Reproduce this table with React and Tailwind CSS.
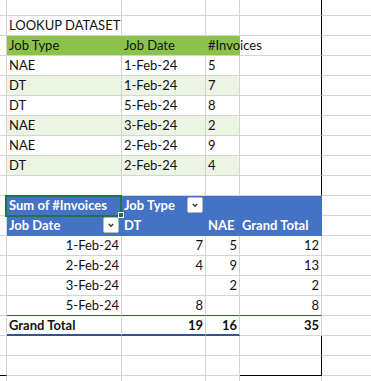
import React from "react";

const RC = {
  g: "border-r-[#d4d4d4]",
  blue: "border-r-[#4472c4]",
  green: "border-r-[#8bc34a]",
  k: "border-r-black",
  none: "border-r-0",
};
const BC = {
  g: "border-b border-b-[#d4d4d4]",
  blue: "border-b border-b-[#4472c4]",
  dk: "border-b border-b-[#2f5597]",
  thick: "border-b-2 border-b-[#2f5597]",
  k: "border-b border-b-black",
  none: "border-b-0",
};

function Cell({ r = "g", b = "g", h = "h-[20px]", cls = "", children }) {
  return (
    <div
      className={`border-r ${RC[r]} ${BC[b]} ${h} ${cls} whitespace-nowrap leading-[19px] px-[2px] min-w-0`}
    >
      {children}
    </div>
  );
}

function Drop() {
  return (
    <div className="w-[16px] h-[16px] bg-white border border-[#b8b8b8] rounded-[2px] flex items-center justify-center shrink-0">
      <svg width="10" height="10" viewBox="0 0 10 10">
        <path d="M2.8 4 L5 6.2 L7.2 4" fill="none" stroke="#333" strokeWidth="1.4" />
      </svg>
    </div>
  );
}

const data = [
  ["NAE", "1-Feb-24", "5", false],
  ["DT", "1-Feb-24", "7", true],
  ["DT", "5-Feb-24", "8", false],
  ["NAE", "3-Feb-24", "2", true],
  ["NAE", "2-Feb-24", "9", false],
  ["DT", "2-Feb-24", "4", true],
];

const pivot = [
  ["1-Feb-24", "7", "5", "12"],
  ["2-Feb-24", "4", "9", "13"],
  ["3-Feb-24", "", "2", "2"],
  ["5-Feb-24", "8", "", "8"],
];

export default function App() {
  const lt = "bg-[#ecf4e4]";
  const bl = "bg-[#4472c4] text-white font-bold";
  return (
    <div className="w-[371px] h-[381px] overflow-hidden bg-white text-[#111] text-[13px] font-['Lato','Noto_Sans',sans-serif]">
      <div className="grid grid-cols-[7px_115px_84px_34px_82px_1fr]">
        {/* r0 */}
        <Cell h="h-[16px]" />
        <Cell h="h-[16px]" />
        <Cell h="h-[16px]" />
        <Cell h="h-[16px]" />
        <Cell h="h-[16px]" r="k" />
        <Cell h="h-[16px]" r="none" />
        {/* r1 */}
        <Cell />
        <Cell>LOOKUP DATASET</Cell>
        <Cell />
        <Cell />
        <Cell r="k" />
        <Cell r="none" />
        {/* r2 header */}
        <Cell />
        <Cell r="green" cls="bg-[#8bc34a]">Job Type</Cell>
        <Cell r="green" cls="bg-[#8bc34a]">Job Date</Cell>
        <Cell r="green" cls="bg-[#8bc34a] relative z-10">#Invoices</Cell>
        <Cell r="k" />
        <Cell r="none" />
        {/* data */}
        {data.map(([t, d, n, l], i) => (
          <React.Fragment key={i}>
            <Cell />
            <Cell cls={l ? lt : ""}>{t}</Cell>
            <Cell cls={l ? lt : ""}>{d}</Cell>
            <Cell cls={l ? lt : ""}>{n}</Cell>
            <Cell r="k" />
            <Cell r="none" />
          </React.Fragment>
        ))}
        {/* r9 */}
        <Cell />
        <Cell />
        <Cell />
        <Cell />
        <Cell r="k" />
        <Cell r="none" />
        {/* r10 pivot header */}
        <Cell />
        <Cell r="blue" b="blue" cls={`${bl} relative`}>
          Sum of #Invoices
          <div className="absolute left-[-2px] top-[-1px] w-[117px] h-[22px] border-2 border-[#217346] z-20" />
          <div className="absolute left-[111px] top-[16px] w-[6px] h-[6px] bg-[#217346] border border-white z-20" />
        </Cell>
        <Cell r="blue" b="blue" cls={`${bl} flex items-start justify-between`}>
          <span>Job Type</span>
          <div className="mt-[1px] mr-[0px]">
            <Drop />
          </div>
        </Cell>
        <Cell r="blue" b="blue" cls={bl} />
        <Cell r="blue" b="blue" cls={bl} />
        <Cell r="none" />
        {/* r11 */}
        <Cell />
        <Cell r="blue" b="blue" cls={`${bl} flex items-start justify-between`}>
          <span>Job Date</span>
          <div className="mt-[1px] mr-[0px]">
            <Drop />
          </div>
        </Cell>
        <Cell r="blue" b="blue" cls={bl}>DT</Cell>
        <Cell r="blue" b="blue" cls={bl}>NAE</Cell>
        <Cell r="blue" b="blue" cls={bl}>Grand Total</Cell>
        <Cell r="none" />
        {/* pivot rows */}
        {pivot.map(([d, a, b, t], i) => {
          const bb = i === pivot.length - 1 ? "dk" : "g";
          return (
            <React.Fragment key={i}>
              <Cell />
              <Cell b={bb} cls="text-right">{d}</Cell>
              <Cell b={bb} cls="text-right">{a}</Cell>
              <Cell b={bb} cls="text-right">{b}</Cell>
              <Cell b={bb} cls="text-right">{t}</Cell>
              <Cell r="none" />
            </React.Fragment>
          );
        })}
        {/* r16 grand total */}
        <Cell />
        <Cell b="thick" cls="font-bold">Grand Total</Cell>
        <Cell b="thick" cls="font-bold text-right">19</Cell>
        <Cell b="thick" cls="font-bold text-right">16</Cell>
        <Cell cls="font-bold text-right">35</Cell>
        <Cell r="none" />
        {/* r17 */}
        <Cell />
        <Cell />
        <Cell />
        <Cell />
        <Cell r="k" />
        <Cell r="none" />
        {/* r18 */}
        <Cell b="k" />
        <Cell />
        <Cell />
        <Cell />
        <Cell r="k" b="k" />
        <Cell r="none" />
        {/* r19 */}
        <Cell h="h-[5px]" b="none" />
        <Cell h="h-[5px]" b="none" />
        <Cell h="h-[5px]" b="none" />
        <Cell h="h-[5px]" b="none" />
        <Cell h="h-[5px]" b="none" />
        <Cell h="h-[5px]" b="none" r="none" />
      </div>
    </div>
  );
}
